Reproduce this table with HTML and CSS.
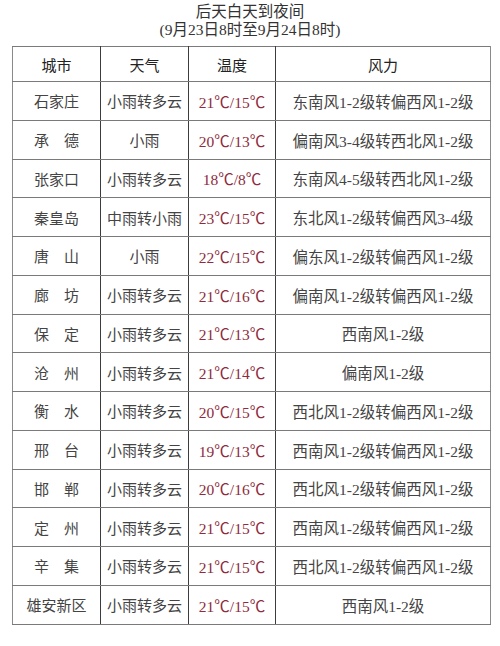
FILE: index.html
```html
<!DOCTYPE html>
<html lang="zh">
<head>
<meta charset="utf-8">
<link rel="stylesheet" href="styles.css">
</head>
<body>
<div class="page">
  <div class="title">
    <div class="t1">后天白天到夜间</div>
    <div class="t2">(9月23日8时至9月24日8时)</div>
  </div>
  <table class="wx">
    <colgroup>
      <col class="c1"><col class="c2"><col class="c3"><col class="c4">
    </colgroup>
    <thead>
      <tr><th>城市</th><th>天气</th><th>温度</th><th>风力</th></tr>
    </thead>
    <tbody>
      <tr><td>石家庄</td><td>小雨转多云</td><td class="temp">21℃/15℃</td><td>东南风1-2级转偏西风1-2级</td></tr>
      <tr><td>承　德</td><td>小雨</td><td class="temp">20℃/13℃</td><td>偏南风3-4级转西北风1-2级</td></tr>
      <tr><td>张家口</td><td>小雨转多云</td><td class="temp">18℃/8℃</td><td>东南风4-5级转西北风1-2级</td></tr>
      <tr><td>秦皇岛</td><td>中雨转小雨</td><td class="temp">23℃/15℃</td><td>东北风1-2级转偏西风3-4级</td></tr>
      <tr><td>唐　山</td><td>小雨</td><td class="temp">22℃/15℃</td><td>偏东风1-2级转偏西风1-2级</td></tr>
      <tr><td>廊　坊</td><td>小雨转多云</td><td class="temp">21℃/16℃</td><td>偏南风1-2级转偏西风1-2级</td></tr>
      <tr><td>保　定</td><td>小雨转多云</td><td class="temp">21℃/13℃</td><td>西南风1-2级</td></tr>
      <tr><td>沧　州</td><td>小雨转多云</td><td class="temp">21℃/14℃</td><td>偏南风1-2级</td></tr>
      <tr><td>衡　水</td><td>小雨转多云</td><td class="temp">20℃/15℃</td><td>西北风1-2级转偏西风1-2级</td></tr>
      <tr><td>邢　台</td><td>小雨转多云</td><td class="temp">19℃/13℃</td><td>西南风1-2级转偏西风1-2级</td></tr>
      <tr><td>邯　郸</td><td>小雨转多云</td><td class="temp">20℃/16℃</td><td>西北风1-2级转偏西风1-2级</td></tr>
      <tr><td>定　州</td><td>小雨转多云</td><td class="temp">21℃/15℃</td><td>西南风1-2级转偏西风1-2级</td></tr>
      <tr><td>辛　集</td><td>小雨转多云</td><td class="temp">21℃/15℃</td><td>西北风1-2级转偏西风1-2级</td></tr>
      <tr><td>雄安新区</td><td>小雨转多云</td><td class="temp">21℃/15℃</td><td>西南风1-2级</td></tr>
    </tbody>
  </table>
</div>
</body>
</html>
```

FILE: styles.css
```css
html, body {
  margin: 0;
  padding: 0;
  background: #ffffff;
}
body {
  font-family: "Liberation Serif", "Noto Sans CJK SC", serif;
  color: #3a3a3a;
}
.page {
  width: 500px;
  height: 646px;
  padding-top: 3px;
  box-sizing: border-box;
}
.title {
  text-align: center;
  font-size: 15.5px;
  line-height: 18px;
  color: #333;
}
.wx {
  margin: 7px 0 0 12px;
  width: 478px;
  border-collapse: collapse;
  table-layout: fixed;
  border: 1.5px solid #8a8a8a;
}
.c1 { width: 88px; }
.c2 { width: 88px; }
.c3 { width: 87px; }
.c4 { width: 215px; }
.wx th, .wx td {
  text-align: center;
  vertical-align: middle;
  padding: 0;
  font-size: 15px;
  border-top: 1.5px solid #7a7a7a;
  border-bottom: 1.5px solid #7a7a7a;
  border-left: 1.5px solid #3c3c3c;
  border-right: 1.5px solid #3c3c3c;
  white-space: nowrap;
}
.wx th {
  height: 34px;
  font-weight: normal;
  color: #222;
}
.wx td {
  height: 37.75px;
  color: #444;
}
.wx td:last-child {
  font-size: 15.5px;
}
.wx td.temp {
  color: #8e2b3c;
  font-size: 15.5px;
}
.wx th:first-child, .wx td:first-child {
  border-left-color: #8a8a8a;
}
.wx th:last-child, .wx td:last-child {
  border-right-color: #8a8a8a;
}
```
